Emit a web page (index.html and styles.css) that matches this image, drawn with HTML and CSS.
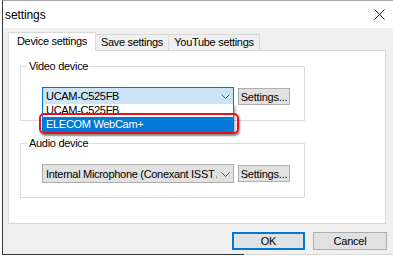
FILE: index.html
```html
<!doctype html>
<html lang="en">
    <head>
        <meta charset="UTF-8" />
        <title>settings</title>
        <link rel="stylesheet" href="styles.css">
    </head>
    <body>
        <div class="window">
            <div class="titlebar">
                <span class="title">settings</span>
                <svg class="close" width="11" height="11" viewBox="0 0 11 11">
                    <path d="M0.5 0.5 L10.5 10.5 M10.5 0.5 L0.5 10.5" stroke="#1a1a1a" stroke-width="1" fill="none" />
                </svg>
            </div>

            <div class="client">
                <div class="tabs">
                    <div class="tab active tab-device">Device settings</div>
                    <div class="tab tab-save">Save settings</div>
                    <div class="tab tab-youtube">YouTube settings</div>
                </div>

                <div class="panel">
                    <div class="group">
                        <span class="group-label">Video device</span>
                        <div class="row">
                            <div class="combo focused">
                                <span class="combo-text">UCAM-C525FB</span>
                                <svg class="chevron" width="9" height="5" viewBox="0 0 9 5">
                                    <path d="M0.5 0.5 L4.5 4.5 L8.5 0.5" stroke="#555" fill="none" />
                                </svg>
                                <div class="droplist">
                                    <div class="item">UCAM-C525FB</div>
                                    <div class="item selected">ELECOM WebCam+</div>
                                </div>
                                <div class="callout"></div>
                            </div>
                            <button class="btn btn-small">Settings...</button>
                        </div>
                    </div>

                    <div class="group group-audio">
                        <span class="group-label">Audio device</span>
                        <div class="row">
                            <div class="combo">
                                <span class="combo-text">Internal Microphone (Conexant ISST Audio)</span>
                                <svg class="chevron" width="9" height="5" viewBox="0 0 9 5">
                                    <path d="M0.5 0.5 L4.5 4.5 L8.5 0.5" stroke="#555" fill="none" />
                                </svg>
                            </div>
                            <button class="btn btn-small">Settings...</button>
                        </div>
                    </div>
                </div>

                <div class="footer">
                    <button class="btn btn-default">OK</button>
                    <button class="btn btn-cancel">Cancel</button>
                </div>
            </div>
        </div>
    </body>
</html>
```

FILE: styles.css
```css
html,
body {
    margin: 0;
    width: 393px;
    height: 256px;
    overflow: hidden;
    background-color: #fff;
    font-family: "Liberation Sans", Arial, sans-serif;
    font-size: 11px;
    color: #000;
}

.window {
    box-sizing: border-box;
    margin-left: 2px;
    width: 391px;
    height: 255px;
    border-left: 1px solid #3c3c3c;
    border-top: 1px solid #a6a6a6;
    padding-bottom: 1px;
    display: flex;
    flex-direction: column;
    background: linear-gradient(to right, #333 241px, #d4d4d4 241px) bottom / 100% 1px no-repeat;
}

.titlebar {
    height: 27px;
    flex-shrink: 0;
    background-color: #fff;
    display: flex;
    align-items: center;
    justify-content: space-between;
    padding: 0 8px 0 2px;
}

.title {
    font-size: 12px;
    letter-spacing: -0.1px;
}

.close {
    display: block;
}

.client {
    flex: 1;
    background-color: #f0f0f0;
    padding: 4px 6px 0 5px;
    display: flex;
    flex-direction: column;
}

/* tabs */
.tabs {
    display: flex;
    align-items: flex-end;
    height: 19px;
    margin-bottom: -1px;
    position: relative;
    z-index: 1;
}

.tab {
    box-sizing: border-box;
    height: 16px;
    margin-bottom: 1px;
    margin-left: -1px;
    border: 1px solid #d9d9d9;
    border-bottom: none;
    background-color: #f0f0f0;
    line-height: 15px;
    text-align: center;
    letter-spacing: -0.3px;
    white-space: nowrap;
}

.tab.active {
    height: 19px;
    margin-bottom: 0;
    margin-left: 0;
    background-color: #fff;
    line-height: 17px;
}

.tab-device {
    width: 88px;
}

.tab-save {
    width: 74px;
}

.tab-youtube {
    width: 92px;
}

.panel {
    box-sizing: border-box;
    width: 378px;
    height: 174px;
    border: 1px solid #d9d9d9;
    background-color: #fff;
    padding: 15px 0 0 11px;
}

/* group boxes */
.group {
    position: relative;
    box-sizing: border-box;
    width: 285px;
    height: 55px;
    border: 1px solid #dcdcdc;
    padding: 20px 0 0 21px;
}

.group-audio {
    margin-top: 22px;
}

.group-label {
    position: absolute;
    top: -7px;
    left: 6px;
    padding: 0 2px;
    background-color: #fff;
    line-height: 13px;
    letter-spacing: -0.3px;
}

.row {
    display: flex;
    align-items: flex-start;
    gap: 4px;
}

/* combo boxes */
.combo {
    position: relative;
    box-sizing: border-box;
    width: 192px;
    height: 18px;
    border: 1px solid #adadad;
    background-color: #e1e1e1;
    padding: 0 0 0 3px;
    display: flex;
    align-items: center;
}

.group-audio .combo {
    height: 19px;
}

.combo.focused {
    border-color: #0078d7;
    background-color: #cce4f7;
}

.combo-text {
    flex: 1;
    min-width: 0;
    overflow: hidden;
    white-space: nowrap;
    letter-spacing: -0.3px;
    line-height: 16px;
}

.chevron {
    flex-shrink: 0;
    margin: 1px 3px 0 4px;
}

.droplist {
    position: absolute;
    top: 100%;
    left: -1px;
    box-sizing: border-box;
    width: 192px;
    border: 1px solid #0078d7;
    border-top: none;
    background-color: #fff;
    box-shadow: 2px 2px 2px rgba(0, 0, 0, 0.25);
}

.item {
    height: 13px;
    line-height: 13px;
    padding-left: 3px;
    letter-spacing: -0.3px;
    overflow: hidden;
}

.item.selected {
    height: 14px;
    line-height: 14px;
    background-color: #0078d7;
    color: #fff;
}

.callout {
    position: absolute;
    top: 25px;
    left: -4px;
    box-sizing: border-box;
    width: 200px;
    height: 21px;
    border: 2px solid #e5121d;
    border-radius: 5px;
    box-shadow: 1px 2px 2px rgba(0, 0, 0, 0.45);
}

/* buttons */
.btn {
    box-sizing: border-box;
    height: 18px;
    margin: 0;
    padding: 0;
    border: 1px solid #adadad;
    background-color: #e1e1e1;
    font-family: inherit;
    font-size: 11px;
    color: #000;
    letter-spacing: -0.2px;
}

.btn-small {
    flex-shrink: 0;
    width: 52px;
    height: 17px;
    margin-top: 1px;
    line-height: 14px;
}

.footer {
    display: flex;
    justify-content: flex-end;
    gap: 8px;
    margin-top: 8px;
}

.btn-default {
    width: 73px;
    border: 2px solid #0078d7;
}

.btn-cancel {
    width: 74px;
}
```
